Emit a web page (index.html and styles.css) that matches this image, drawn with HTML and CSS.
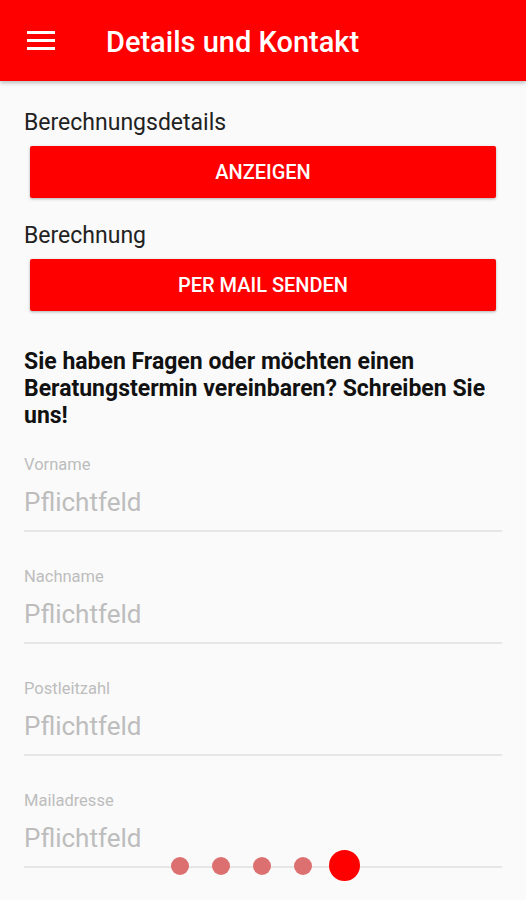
FILE: index.html
```html
<!DOCTYPE html>
<html lang="de">
<head>
    <meta charset="UTF-8">
    <meta name="viewport" content="width=device-width, initial-scale=1.0">
    <title>Details und Kontakt</title>
    <link rel="stylesheet" href="styles.css">
</head>
<body>

<div class="toolbar">
    <svg class="menu-icon" width="28" height="21" viewBox="0 0 28 21">
        <rect x="0" y="1" width="28" height="3" fill="#fff"/>
        <rect x="0" y="9" width="28" height="3" fill="#fff"/>
        <rect x="0" y="17" width="28" height="3" fill="#fff"/>
    </svg>
    <h1>Details und Kontakt</h1>
</div>

<div class="content">
    <p class="section-label">Berechnungsdetails</p>
    <button class="red-button">ANZEIGEN</button>

    <p class="section-label">Berechnung</p>
    <button class="red-button">PER MAIL SENDEN</button>

    <p class="intro">Sie haben Fragen oder möchten einen Beratungstermin vereinbaren? Schreiben Sie uns!</p>

    <div class="field">
        <label>Vorname</label>
        <div class="placeholder">Pflichtfeld</div>
    </div>
    <div class="field">
        <label>Nachname</label>
        <div class="placeholder">Pflichtfeld</div>
    </div>
    <div class="field">
        <label>Postleitzahl</label>
        <div class="placeholder">Pflichtfeld</div>
    </div>
    <div class="field">
        <label>Mailadresse</label>
        <div class="placeholder">Pflichtfeld</div>
    </div>
</div>

<div class="pager">
    <span class="dot"></span>
    <span class="dot"></span>
    <span class="dot"></span>
    <span class="dot"></span>
    <span class="dot active"></span>
</div>

</body>
</html>
```

FILE: styles.css
```css
body {
    margin: 0;
    font-family: Roboto, "Noto Sans", sans-serif;
    background-color: #fafafa;
    height: 900px;
    overflow: hidden;
    position: relative;
}
.toolbar {
    height: 81px;
    background-color: #ff0000;
    display: flex;
    align-items: center;
    padding-left: 27px;
    box-shadow: 0 2px 4px rgba(0, 0, 0, 0.25);
}
.menu-icon {
    margin-right: 51px;
    margin-top: -1px;
}
.toolbar h1 {
    margin: 0;
    color: white;
    font-size: 29px;
    font-weight: 500;
    margin-top: 2px;
}
.content {
    padding: 0 24px;
}
.section-label {
    margin: 0;
    font-size: 23px;
    color: #222;
    line-height: 28px;
}
.content .section-label:first-child {
    padding-top: 28px;
}
.red-button {
    display: block;
    width: 466px;
    height: 52px;
    margin: 9px 0 0 6px;
    background-color: #ff0000;
    color: white;
    border: none;
    border-radius: 2px;
    font-family: Roboto, sans-serif;
    font-size: 20px;
    font-weight: 500;
    box-shadow: 0 1px 3px rgba(0, 0, 0, 0.3);
}
.red-button + .section-label {
    margin-top: 24px;
}
.intro {
    margin: 37px 0 0 0;
    font-size: 23px;
    font-weight: bold;
    line-height: 27px;
    color: #111;
}
.field {
    margin-top: 35px;
    padding-bottom: 12px;
    border-bottom: 2px solid #e6e6e6;
    width: 478px;
}
.intro + .field {
    margin-top: 26px;
}
.field label {
    display: block;
    font-size: 16.5px;
    color: #bdbdbd;
    line-height: 20px;
}
.placeholder {
    margin-top: 11px;
    font-size: 26px;
    color: #bdbdbd;
    line-height: 32px;
}
.pager {
    position: absolute;
    left: 171px;
    top: 850px;
    display: flex;
    align-items: center;
    gap: 23px;
}
.dot {
    width: 18px;
    height: 18px;
    border-radius: 50%;
    background-color: #dc7070;
}
.dot.active {
    width: 31px;
    height: 31px;
    background-color: #ff0000;
    margin-left: -6px;
}
```
